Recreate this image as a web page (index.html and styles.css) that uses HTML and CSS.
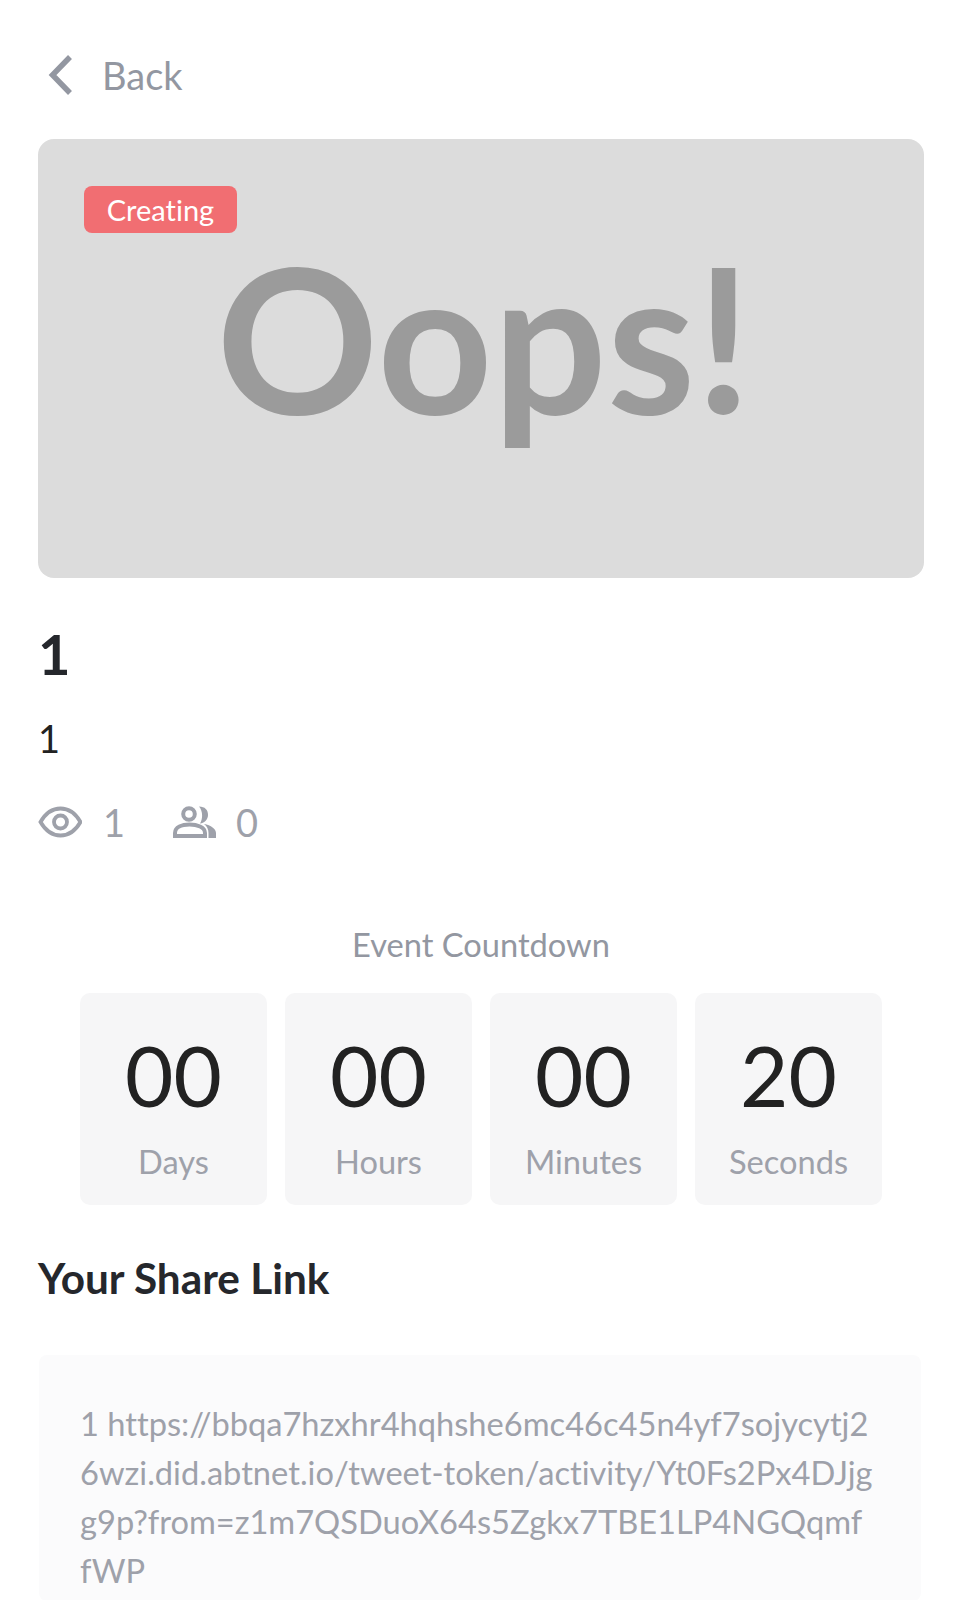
FILE: index.html
```html
<!DOCTYPE html>
<html lang="en">
    <head>
        <meta charset="utf-8">
        <meta name="viewport" content="width=device-width, initial-scale=1.0">
        <title>Event</title>
        <link rel="stylesheet" href="styles.css">
    </head>
    <body>
        <div class="page">
            <a class="back">
                <svg class="back-icon" viewBox="0 0 24 40"><path d="M22 2 L4.500 20 L22 38" fill="none" stroke="currentColor" stroke-width="5.500"/></svg>
                Back
            </a>
            <div class="cover">
                <span class="badge">Creating</span>
                <div class="oops">Oops!</div>
            </div>
            <h1 class="title">1</h1>
            <p class="desc">1</p>
            <div class="stats">
                <div class="stat">
                    <svg class="eye" viewBox="0 0 44 32"><path d="M2.500 16 C8 6.500 15 2.500 22.500 2.500 C30 2.500 37 6.500 42.500 16 C37 25.500 30 29.500 22.500 29.500 C15 29.500 8 25.500 2.500 16 Z" fill="none" stroke="currentColor" stroke-width="3.800"/><circle cx="22.500" cy="16" r="6.500" fill="none" stroke="currentColor" stroke-width="3.800"/></svg>
                    1
                </div>
                <div class="stat">
                    <svg class="people" viewBox="0 0 44 34"><circle cx="16" cy="9" r="5.800" fill="none" stroke="currentColor" stroke-width="4"/><path d="M2 31 V28 C2 22 9 19.500 16.500 19.500 C24 19.500 32 22 32 28 V31 Z" fill="none" stroke="currentColor" stroke-width="4"/><path d="M26 1.500 C32 1.500 35 5 35 10 C35 15 31 18 27 18.500 C30 14 30 6 26 1.500 Z" fill="currentColor"/><path d="M31 19 C38 20 43 24 43 28 V33 H35.500 V28 C35.500 24.500 34 21 31 19 Z" fill="currentColor"/></svg>
                    0
                </div>
            </div>
            <div class="countdown">
                <div class="countdown-title">Event Countdown</div>
                <div class="cells">
                    <div class="cell"><div class="num">00</div><div class="unit">Days</div></div>
                    <div class="cell"><div class="num">00</div><div class="unit">Hours</div></div>
                    <div class="cell"><div class="num">00</div><div class="unit">Minutes</div></div>
                    <div class="cell"><div class="num">20</div><div class="unit">Seconds</div></div>
                </div>
            </div>
            <h2 class="share-title">Your Share Link</h2>
            <div class="share-box">1 https://bbqa7hzxhr4hqhshe6mc46c45n4yf7sojycytj26wzi.did.abtnet.io/tweet-token/activity/Yt0Fs2Px4DJjgg9p?from=z1m7QSDuoX64s5Zgkx7TBE1LP4NGQqmffWP</div>
        </div>
    </body>
</html>
```

FILE: styles.css
```css
*{
    margin: 0;
    padding: 0;
    box-sizing: border-box;
    font-family: Lato, "Liberation Sans", sans-serif;
    font-variant-ligatures: none;
}
html, body{
    height: 1600px;
    overflow: hidden;
    background-color: #fff;
}
.page{
    padding: 47px 36px 0 38px;
}
.back{
    display: flex;
    align-items: center;
    gap: 29px;
    height: 56px;
    padding-left: 9px;
    font-size: 38px;
    color: #9397a1;
}
.back-icon{
    width: 26px;
    height: 40px;
    flex: none;
}
.cover{
    margin-top: 36px;
    height: 439px;
    border-radius: 16px;
    background-color: #dcdcdc;
    position: relative;
    display: flex;
    justify-content: center;
    align-items: center;
}
.badge{
    position: absolute;
    left: 46px;
    top: 47px;
    width: 153px;
    height: 47px;
    border-radius: 8px;
    background-color: #f16e72;
    color: #fff;
    font-size: 29px;
    display: flex;
    justify-content: center;
    align-items: center;
}
.oops{
    font-size: 201px;
    font-weight: 700;
    color: #9b9b9b;
    line-height: 1;
    margin: 0 0 44px 6px;
}
.title{
    margin-top: 46px;
    font-size: 56px;
    font-weight: 700;
    line-height: 60px;
    color: #25272c;
}
.desc{
    margin-top: 32px;
    font-size: 38px;
    line-height: 44px;
    color: #222;
}
.stats{
    margin-top: 42px;
    display: flex;
    gap: 48px;
}
.stat{
    display: flex;
    align-items: center;
    gap: 21px;
    height: 40px;
    font-size: 38px;
    color: #9ea1aa;
}
.stat + .stat{
    gap: 19px;
}
.eye{
    width: 44px;
    height: 32px;
}
.people{
    width: 44px;
    height: 34px;
}
.countdown{
    margin-top: 83px;
}
.countdown-title{
    text-align: center;
    font-size: 32.640px;
    line-height: 40px;
    color: #9397a1;
}
.cells{
    margin-top: 28px;
    display: flex;
    justify-content: center;
    gap: 18px;
}
.cell{
    width: 187px;
    height: 212px;
    border-radius: 10px;
    background-color: #f6f6f7;
    text-align: center;
}
.num{
    margin-top: 34px;
    font-size: 83.500px;
    line-height: 96px;
    color: #222;
}
.unit{
    margin-top: 19px;
    font-size: 32.640px;
    line-height: 40px;
    color: #9ea1aa;
}
.share-title{
    margin-top: 47px;
    font-size: 42.300px;
    font-weight: 700;
    line-height: 52px;
    color: #25272c;
}
.share-box{
    margin: 51px 3px 0 1px;
    padding: 44px 48px 0 41px;
    height: 246px;
    background-color: #fbfbfc;
    border-radius: 8px;
    font-size: 32.640px;
    line-height: 49px;
    color: #9ea1aa;
    word-break: break-all;
}
```
